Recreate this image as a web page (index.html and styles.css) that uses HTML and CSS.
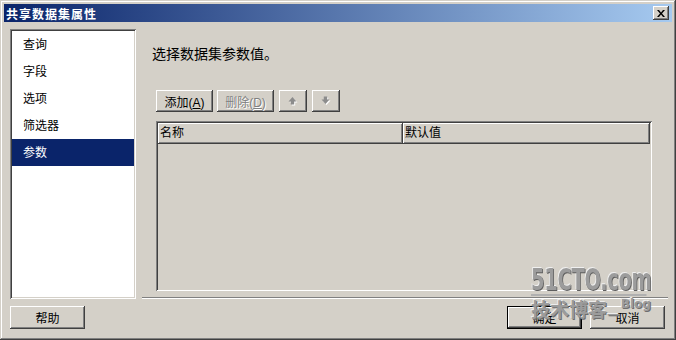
FILE: index.html
```html
<!DOCTYPE html>
<html lang="zh-CN">
<head>
    <meta charset="UTF-8">
    <title>共享数据集属性</title>
    <link rel="stylesheet" href="styles.css">
</head>
<body>
    <div class="window">
        <div class="titlebar">
            <span class="title">共享数据集属性</span>
            <button class="close" aria-label="关闭">
                <svg width="8" height="7" viewBox="0 0 8 7">
                    <path d="M0 0h2l2 2.5 2-2.5h2l-3 3.5 3 3.5h-2l-2-2.5-2 2.5h-2l3-3.5z" fill="#000"/>
                </svg>
            </button>
        </div>

        <div class="content">
            <div class="main">
                <ul class="nav">
                    <li>查询</li>
                    <li>字段</li>
                    <li>选项</li>
                    <li>筛选器</li>
                    <li class="active">参数</li>
                </ul>

                <div class="panel">
                    <p class="prompt">选择数据集参数值。</p>
                    <div class="toolbar">
                        <button class="btn btn-add">添加(<u>A</u>)</button>
                        <button class="btn btn-del" disabled>删除(<u>D</u>)</button>
                        <button class="btn btn-arrow" disabled aria-label="上移">
                            <svg width="10" height="10" viewBox="0 0 10 10">
                                <path d="M4.5 1l4 4.5h-2.3v3h-3.4v-3h-2.3z" fill="#fff" transform="translate(1 1)"/>
                                <path d="M4.5 1l4 4.5h-2.3v3h-3.4v-3h-2.3z" fill="#8c8c8c"/>
                            </svg>
                        </button>
                        <button class="btn btn-arrow" disabled aria-label="下移">
                            <svg width="10" height="10" viewBox="0 0 10 10">
                                <path d="M2.8 0.5h3.4v3h2.3l-4 4.5-4-4.5h2.3z" fill="#fff" transform="translate(1 1)"/>
                                <path d="M2.8 0.5h3.4v3h2.3l-4 4.5-4-4.5h2.3z" fill="#8c8c8c"/>
                            </svg>
                        </button>
                    </div>
                    <div class="grid">
                        <div class="grid-head">
                            <div class="col col-name">名称</div>
                            <div class="col col-value">默认值</div>
                        </div>
                        <div class="grid-body"></div>
                    </div>
                </div>
            </div>

            <div class="footer">
                <button class="btn btn-footer">帮助</button>
                <div class="actions">
                    <button class="btn btn-footer btn-default">确定</button>
                    <button class="btn btn-footer">取消</button>
                </div>
            </div>
        </div>

        <div class="watermark">
            <div class="wm-site">51CTO.com</div>
            <div class="wm-blog">技术博客<span class="wm-dash">—</span><span class="wm-en">Blog</span></div>
        </div>
    </div>
</body>
</html>
```

FILE: styles.css
```css
* {
    box-sizing: border-box;
}
body {
    margin: 0;
    background-color: #d4d0c8;
    font-family: "Liberation Sans", "Noto Sans CJK SC", sans-serif;
    font-size: 12px;
    color: #000;
}
.window {
    position: relative;
    width: 676px;
    height: 340px;
    padding: 4px;
    display: flex;
    flex-direction: column;
    background-color: #d4d0c8;
    /* classic raised frame */
    box-shadow: inset -1px -1px #404040, inset 1px 1px #d4d0c8, inset -2px -2px #808080, inset 2px 2px #fff;
}
.titlebar {
    height: 18px;
    display: flex;
    align-items: center;
    justify-content: space-between;
    padding: 0 3px 0 2px;
    background: linear-gradient(to right, #0a246a, #a6caf0);
}
.title {
    color: #fff;
    font-weight: bold;
    font-size: 12px;
    letter-spacing: 1px;
    font-family: "Noto Sans CJK SC", sans-serif;
}
.close {
    width: 16px;
    height: 14px;
    padding: 0;
    border: none;
    display: flex;
    align-items: center;
    justify-content: center;
    background-color: #d4d0c8;
    box-shadow: inset -1px -1px #404040, inset 1px 1px #fff, inset -2px -2px #808080;
}
.content {
    flex: 1;
    display: flex;
    flex-direction: column;
    padding: 7px 4px 7px 6px;
}
.main {
    display: flex;
    gap: 6px;
    height: 270px;
}
.nav {
    width: 126px;
    margin: 0;
    padding: 2px;
    list-style: none;
    background-color: #fff;
    /* sunken frame */
    box-shadow: inset 1px 1px #808080, inset -1px -1px #fff, inset 2px 2px #404040, inset -2px -2px #d4d0c8;
}
.nav li {
    height: 27px;
    line-height: 25px;
    padding: 2px 0 0 11px;
}
.nav li.active {
    background-color: #0a246a;
    color: #fff;
}
.panel {
    flex: 1;
    display: flex;
    flex-direction: column;
    padding: 17px 16px 8px 10px;
    box-shadow: inset 0 -1px #fff, inset 0 -2px #808080;
}
.prompt {
    margin: 0;
    font-size: 14px;
    line-height: 16px;
}
.toolbar {
    display: flex;
    gap: 4px;
    margin: 28px 0 0 4px;
}
.btn {
    height: 22px;
    padding: 0;
    border: none;
    font-family: inherit;
    font-size: 12px;
    color: #000;
    background-color: #d4d0c8;
    box-shadow: inset -1px -1px #404040, inset 1px 1px #fff, inset -2px -2px #808080;
}
.btn u {
    text-decoration: underline;
}
.btn-add {
    width: 57px;
}
.btn-del {
    width: 57px;
    color: #808080;
    text-shadow: 1px 1px #fff;
}
.btn-arrow {
    width: 28px;
    margin-left: 1px;
    display: flex;
    align-items: center;
    justify-content: center;
}
.grid {
    flex: 1;
    display: flex;
    flex-direction: column;
    margin: 9px 0 0 4px;
    padding: 2px;
    box-shadow: inset 1px 1px #808080, inset -1px -1px #fff, inset 2px 2px #404040, inset -2px -2px #d4d0c8;
}
.grid-head {
    display: flex;
    height: 21px;
}
.col {
    line-height: 21px;
    padding-left: 2px;
    box-shadow: inset -1px -1px #404040, inset 1px 1px #fff, inset -2px -2px #808080;
}
.col-name {
    width: 245px;
}
.col-value {
    flex: 1;
}
.footer {
    display: flex;
    justify-content: space-between;
    margin-top: 7px;
    padding-right: 3px;
}
.actions {
    display: flex;
    gap: 8px;
}
.btn-footer {
    width: 75px;
    height: 23px;
}
.btn-default {
    /* default button gets the extra black ring */
    box-shadow: inset 0 0 0 1px #000, inset -2px -2px #404040, inset 2px 2px #fff, inset -3px -3px #808080;
}
.watermark {
    position: absolute;
    left: 531px;
    top: 264px;
    color: #9c9c9c;
    pointer-events: none;
}
.wm-site {
    font-family: "DejaVu Sans Condensed", "DejaVu Sans", sans-serif;
    font-weight: bold;
    font-size: 31px;
    line-height: 30px;
    letter-spacing: -0.5px;
    transform: scaleX(0.7);
    transform-origin: left;
    width: 165px;
    border-bottom: 2px solid #b0b0b0;
    text-shadow: 1px 1px #5e5e5e, -1px -1px #f0f0f0;
}
.wm-blog {
    display: flex;
    align-items: flex-start;
    margin-top: 3px;
    font-family: "Noto Sans CJK SC", sans-serif;
    font-weight: bold;
    font-size: 19px;
    line-height: 20px;
    text-shadow: 1px 1px #6e6e6e, -1px -1px #ececec;
}
.wm-dash {
    font-size: 14px;
    margin-top: 4px;
}
.wm-en {
    font-family: "DejaVu Sans", sans-serif;
    font-size: 12px;
    line-height: 12px;
    margin: -1px 0 0 1px;
}
```
